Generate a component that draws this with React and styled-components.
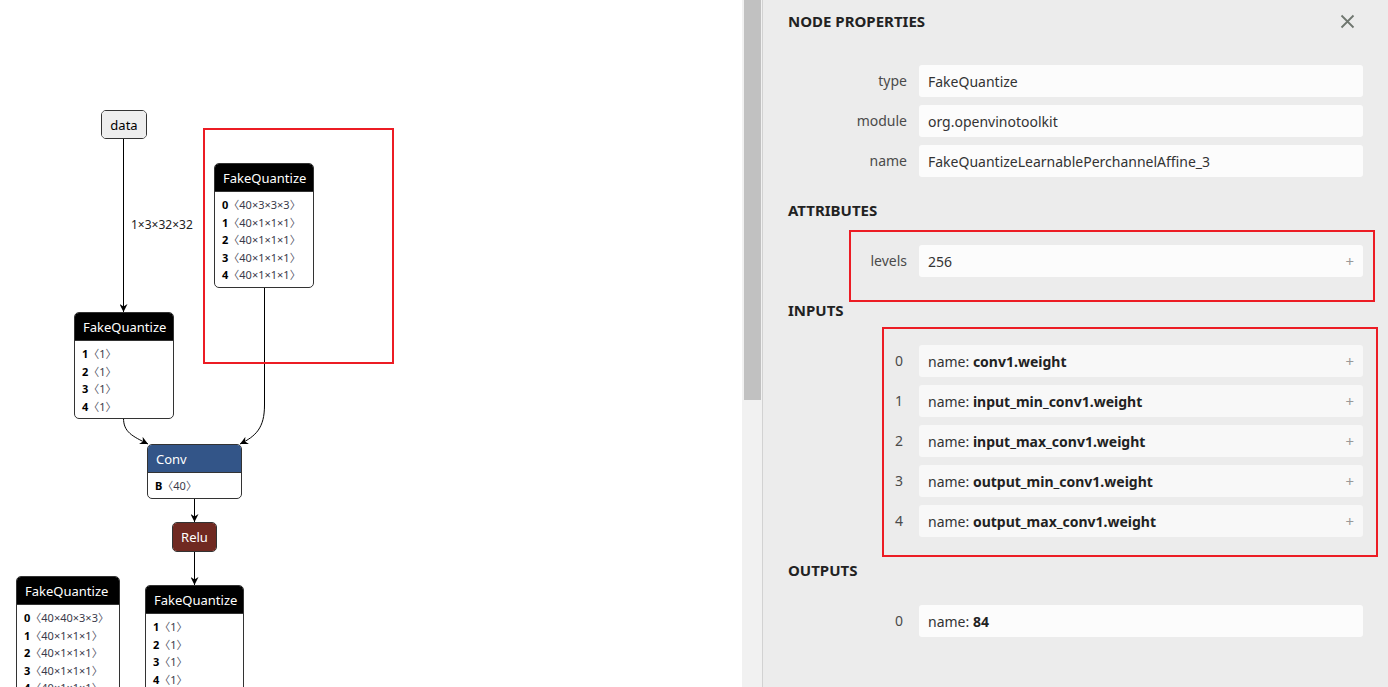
import React from "react";
import styled, { createGlobalStyle } from "styled-components";

const Global = createGlobalStyle`
  html, body { margin: 0; padding: 0; }
  body { font-family: "Noto Sans", "DejaVu Sans", sans-serif; background: #fff; }
  #root { height: 687px; overflow: hidden; }
`;

const Page = styled.div`
  display: flex;
  width: 1388px;
  height: 687px;
  overflow: hidden;
`;

const Graph = styled.div`
  position: relative;
  width: 742px;
  height: 687px;
  background: #fff;
  overflow: hidden;
  font-family: "Noto Sans", "DejaVu Sans", sans-serif;
`;

const EdgeLayer = styled.svg`
  position: absolute;
  left: 0;
  top: 0;
`;

const Node = styled.div`
  position: absolute;
  left: ${(p) => p.$x}px;
  top: ${(p) => p.$y}px;
  width: ${(p) => p.$w}px;
  box-sizing: border-box;
  border: 1px solid #333;
  border-radius: 5px;
  overflow: hidden;
  background: #fff;
`;

const NodeHeader = styled.div`
  height: ${(p) => p.$h || 28}px;
  box-sizing: border-box;
  background: ${(p) => p.$bg};
  color: ${(p) => p.$fg || "#fff"};
  border-bottom: ${(p) => (p.$solo ? "none" : "1px solid #333")};
  font-size: 13px;
  display: flex;
  align-items: center;
  justify-content: ${(p) => (p.$center ? "center" : "flex-start")};
  padding: 0 8px;
  white-space: nowrap;
`;

const AttrList = styled.div`
  padding: 4px 7px 3px;
  font-size: 11px;
`;

const AttrRow = styled.div`
  height: 17.5px;
  line-height: 17.5px;
  white-space: nowrap;
  color: #3a3a4a;
`;

const AttrKey = styled.b`
  color: #000;
  font-weight: 700;
  margin-right: 0;
`;

const Bracket = styled.span`
  font-family: "Noto Sans CJK SC", "DejaVu Sans", sans-serif;
  font-size: 11px;
  color: #556;
`;

const EdgeLabel = styled.div`
  position: absolute;
  left: ${(p) => p.$x}px;
  top: ${(p) => p.$y}px;
  font-size: 12px;
  color: #222;
  white-space: nowrap;
`;

const Highlight = styled.div`
  position: absolute;
  left: ${(p) => p.$x}px;
  top: ${(p) => p.$y}px;
  width: ${(p) => p.$w}px;
  height: ${(p) => p.$h}px;
  box-sizing: border-box;
  border: 2px solid #ec1c24;
  pointer-events: none;
`;

const ScrollTrack = styled.div`
  width: 20px;
  height: 687px;
  background: #f1f1f1;
  box-sizing: border-box;
  padding-left: 2px;
  padding-right: 1px;
`;

const ScrollThumb = styled.div`
  height: 400px;
  background: #c1c1c1;
`;

const Sidebar = styled.div`
  position: relative;
  width: 626px;
  height: 687px;
  border-left: 1px solid #d2d2d2;
  background: #ececec;
  padding: 0 25px;
  box-sizing: border-box;
  color: #333;
  font-size: 14px;
`;

const TitleBar = styled.div`
  display: flex;
  align-items: center;
  justify-content: space-between;
  padding-top: 11px;
  height: 20px;
  margin-bottom: 34px;
`;

const Heading = styled.div`
  font-weight: 700;
  font-size: 15px;
  line-height: 20px;
  height: 20px;
  color: #222;
`;

const SectionHeading = styled(Heading)`
  margin-top: 23px;
  margin-bottom: 25px;
`;

const CloseButton = styled.div`
  width: 15px;
  height: 15px;
  margin-right: 8px;
  display: flex;
`;

const Rows = styled.div`
  display: flex;
  flex-direction: column;
  gap: 8px;
`;

const Row = styled.div`
  display: grid;
  grid-template-columns: 119px 1fr;
  column-gap: 12px;
  height: 32px;
`;

const Label = styled.div`
  text-align: right;
  line-height: 32px;
  color: #4a4a4a;
  padding-right: ${(p) => (p.$index ? "4px" : "0")};
`;

const Value = styled.div`
  display: flex;
  align-items: center;
  justify-content: space-between;
  background: ${(p) => p.$bg || "#fcfcfc"};
  border-radius: 3px;
  padding: 0 9px 0 9px;
  color: #333;
  white-space: nowrap;
  b { font-weight: 700; color: #222; }
`;

const Plus = styled.span`
  color: #999;
  font-size: 15px;
`;

const Angle = ({ children }) => (
  <span>
    <Bracket>{"\u3008"}</Bracket>
    {children}
    <Bracket>{"\u3009"}</Bracket>
  </span>
);

const FQNode = ({ x, y, w, attrs }) => (
  <Node $x={x} $y={y} $w={w}>
    <NodeHeader $bg="#000">FakeQuantize</NodeHeader>
    <AttrList>
      {attrs.map(([k, v]) => (
        <AttrRow key={k}>
          <AttrKey>{k}</AttrKey>
          <Angle>{v}</Angle>
        </AttrRow>
      ))}
    </AttrList>
  </Node>
);

const inputs = [
  ["0", "conv1.weight"],
  ["1", "input_min_conv1.weight"],
  ["2", "input_max_conv1.weight"],
  ["3", "output_min_conv1.weight"],
  ["4", "output_max_conv1.weight"],
];

export default function App() {
  return (
    <Page>
      <Global />
      <Graph>
        <EdgeLayer width="742" height="687">
          <defs>
            <marker id="arrow" viewBox="0 0 10 10" refX="10" refY="5" markerWidth="8" markerHeight="8" markerUnits="userSpaceOnUse" orient="auto">
              <path d="M0 0 L10 5 L0 10 L3 5 Z" fill="#000" />
            </marker>
          </defs>
          <g fill="none" stroke="#000" strokeWidth="1">
            <path d="M123.5 139 L123.5 312" markerEnd="url(#arrow)" />
            <path d="M123.5 418 C123.5 432 132 436 148 444" markerEnd="url(#arrow)" />
            <path d="M264.5 287 L264.5 405 C264.5 428 256 436 240 444" markerEnd="url(#arrow)" />
            <path d="M194.5 497 L194.5 522" markerEnd="url(#arrow)" />
            <path d="M194.5 552 L194.5 585" markerEnd="url(#arrow)" />
          </g>
        </EdgeLayer>

        <Node $x={101} $y={110} $w={46}>
          <NodeHeader $bg="#eee" $fg="#000" $h={27} $center $solo>data</NodeHeader>
        </Node>

        <EdgeLabel $x={131} $y={216}>1×3×32×32</EdgeLabel>

        <FQNode
          x={214}
          y={163}
          w={100}
          attrs={[
            ["0", "40×3×3×3"],
            ["1", "40×1×1×1"],
            ["2", "40×1×1×1"],
            ["3", "40×1×1×1"],
            ["4", "40×1×1×1"],
          ]}
        />

        <FQNode
          x={74}
          y={312}
          w={100}
          attrs={[
            ["1", "1"],
            ["2", "1"],
            ["3", "1"],
            ["4", "1"],
          ]}
        />

        <Node $x={147} $y={444} $w={95}>
          <NodeHeader $bg="#335588" $h={28}>Conv</NodeHeader>
          <AttrList>
            <AttrRow>
              <AttrKey>B</AttrKey>
              <Angle>40</Angle>
            </AttrRow>
          </AttrList>
        </Node>

        <Node $x={172} $y={522} $w={45}>
          <NodeHeader $bg="#702921" $h={28} $center $solo>Relu</NodeHeader>
        </Node>

        <FQNode
          x={16}
          y={576}
          w={104}
          attrs={[
            ["0", "40×40×3×3"],
            ["1", "40×1×1×1"],
            ["2", "40×1×1×1"],
            ["3", "40×1×1×1"],
            ["4", "40×1×1×1"],
          ]}
        />

        <FQNode
          x={145}
          y={585}
          w={99}
          attrs={[
            ["1", "1"],
            ["2", "1"],
            ["3", "1"],
            ["4", "1"],
          ]}
        />

        <Highlight $x={203} $y={128} $w={191} $h={236} />
      </Graph>

      <ScrollTrack>
        <ScrollThumb />
      </ScrollTrack>

      <Sidebar>
        <TitleBar>
          <Heading>NODE PROPERTIES</Heading>
          <CloseButton>
            <svg width="15" height="15" viewBox="0 0 15 15">
              <path d="M1.5 1.5 L13.5 13.5 M13.5 1.5 L1.5 13.5" stroke="#6f766f" strokeWidth="1.8" fill="none" />
            </svg>
          </CloseButton>
        </TitleBar>

        <Rows>
          <Row>
            <Label>type</Label>
            <Value>FakeQuantize</Value>
          </Row>
          <Row>
            <Label>module</Label>
            <Value>org.openvinotoolkit</Value>
          </Row>
          <Row>
            <Label>name</Label>
            <Value>FakeQuantizeLearnablePerchannelAffine_3</Value>
          </Row>
        </Rows>

        <SectionHeading>ATTRIBUTES</SectionHeading>
        <Rows>
          <Row>
            <Label>levels</Label>
            <Value>
              256
              <Plus>+</Plus>
            </Value>
          </Row>
        </Rows>

        <SectionHeading>INPUTS</SectionHeading>
        <Rows>
          {inputs.map(([i, n]) => (
            <Row key={i}>
              <Label $index>{i}</Label>
              <Value $bg="#f8f8f8">
                <span>
                  name: <b>{n}</b>
                </span>
                <Plus>+</Plus>
              </Value>
            </Row>
          ))}
        </Rows>

        <SectionHeading>OUTPUTS</SectionHeading>
        <Rows>
          <Row>
            <Label $index>0</Label>
            <Value>
              <span>
                name: <b>84</b>
              </span>
            </Value>
          </Row>
        </Rows>

        <Highlight $x={86} $y={230} $w={526} $h={72} />
        <Highlight $x={119} $y={327} $w={496} $h={230} />
      </Sidebar>
    </Page>
  );
}
